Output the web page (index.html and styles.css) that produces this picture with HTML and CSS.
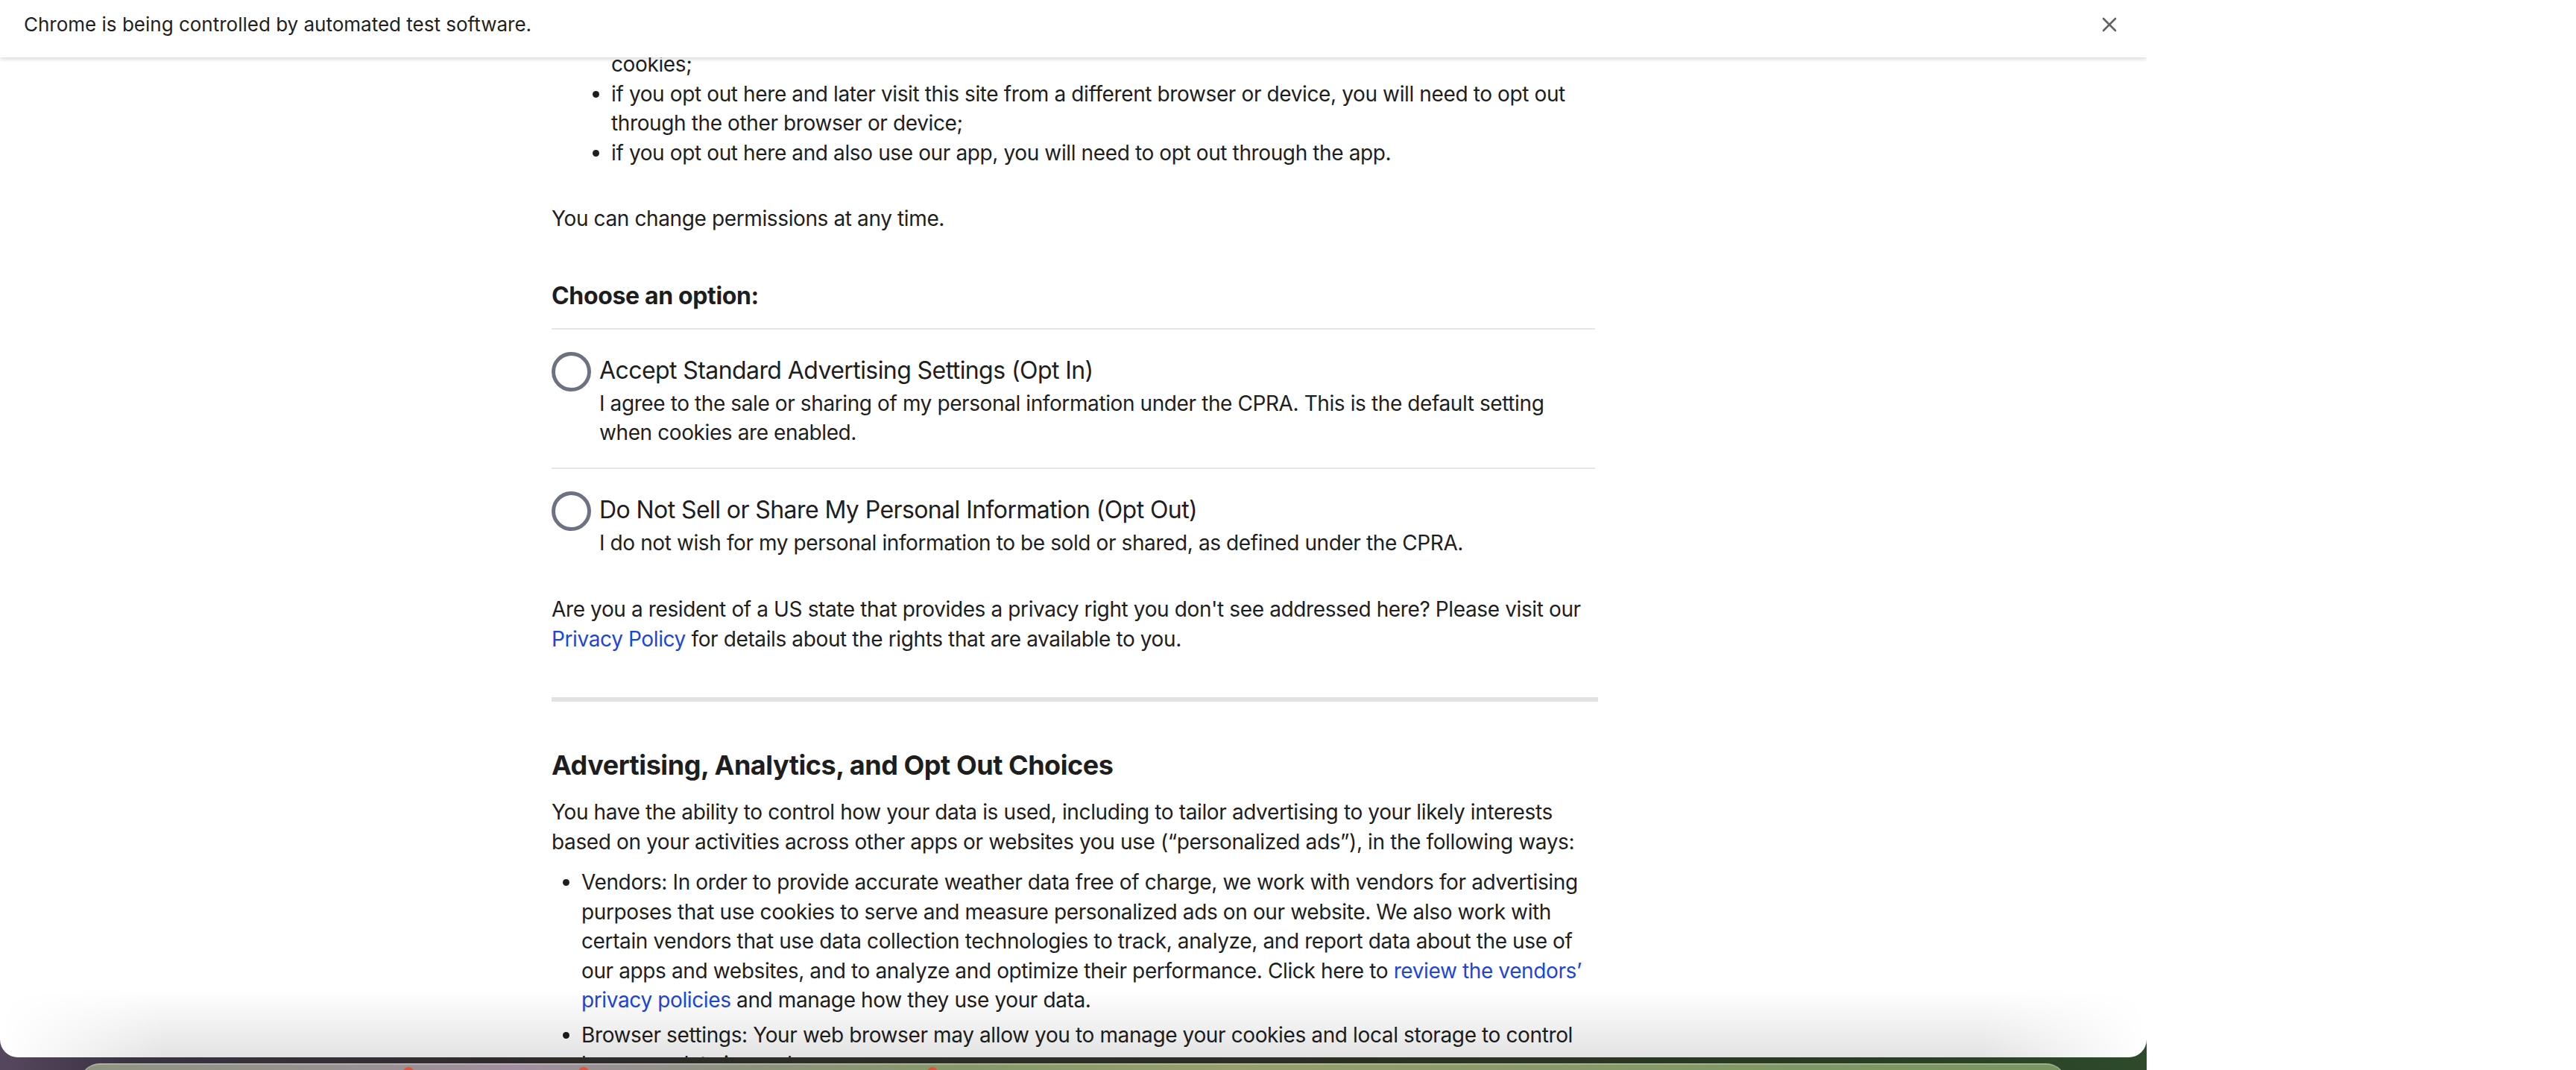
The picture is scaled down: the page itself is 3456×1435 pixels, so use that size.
FILE: index.html
```html
<!DOCTYPE html>
<html lang="en">
<head>
<meta charset="utf-8">
<title>Privacy Settings</title>
<link rel="stylesheet" href="styles.css">
</head>
<body>
<div class="screen">
  <div class="window">
    <div class="infobar">
      <span class="infobar-text">Chrome is being controlled by automated test software.</span>
      <span class="infobar-close">
        <svg width="20" height="20" viewBox="0 0 20 20"><path d="M2 2 L18 18 M18 2 L2 18" stroke="#5f6368" stroke-width="2.6" stroke-linecap="round" fill="none"/></svg>
      </span>
    </div>
    <main class="page">
      <ul class="list-a">
        <li class="cont">cookies;</li>
        <li>if you opt out here and later visit this site from a different browser or device, you will need to opt out through the other browser or device;</li>
        <li>if you opt out here and also use our app, you will need to opt out through the app.</li>
      </ul>
      <p class="perm">You can change permissions at any time.</p>
      <h3 class="choose">Choose an option:</h3>
      <div class="options">
        <label class="option">
          <span class="radio"></span>
          <span class="opt-text">
            <span class="opt-title">Accept Standard Advertising Settings (Opt In)</span>
            <span class="opt-desc">I agree to the sale or sharing of my personal information under the CPRA. This is the default setting when cookies are enabled.</span>
          </span>
        </label>
        <label class="option">
          <span class="radio"></span>
          <span class="opt-text">
            <span class="opt-title">Do Not Sell or Share My Personal Information (Opt Out)</span>
            <span class="opt-desc">I do not wish for my personal information to be sold or shared, as defined under the CPRA.</span>
          </span>
        </label>
      </div>
      <p class="resident">Are you a resident of a US state that provides a privacy right you don't see addressed here? Please visit our <a href="#">Privacy Policy</a> for details about the rights that are available to you.</p>
      <hr class="thick">
      <h2 class="section-title">Advertising, Analytics, and Opt Out Choices</h2>
      <p class="intro">You have the ability to control how your data is used, including to tailor advertising to your likely interests based on your activities across other apps or websites you use (“personalized ads”), in the following ways:</p>
      <ul class="list-b">
        <li>Vendors: In order to provide accurate weather data free of charge, we work with vendors for advertising purposes that use cookies to serve and measure personalized ads on our website. We also work with certain vendors that use data collection technologies to track, analyze, and report data about the use of our apps and websites, and to analyze and optimize their performance. Click here to <a href="#">review the vendors’ privacy policies</a> and manage how they use your data.</li>
        <li>Browser settings: Your web browser may allow you to manage your cookies and local storage to control how your data is used.</li>
      </ul>
    </main>
    <div class="fade"></div>
  </div>
  <div class="dock">
    <span class="dock-icon i1"></span>
    <span class="dock-icon i2"></span>
    <span class="dock-icon i3"></span>
  </div>
</div>
</body>
</html>
```
FILE: styles.css
```css
html, body {
  margin: 0;
  padding: 0;
}
body {
  width: 3456px;
  height: 1435px;
  overflow: hidden;
  background: #ffffff;
  font-family: Inter, "Noto Sans", sans-serif;
}
.screen {
  width: 2880px;
  height: 1435px;
  overflow: hidden;
  background: linear-gradient(90deg, #56475e 0%, #3b3242 6%, #2e2b2a 25%, #2b2e24 60%, #2a3a24 85%, #2d4a2b 100%);
}
.window {
  position: relative;
  height: 1418px;
  background: #ffffff;
  border-radius: 0 0 24px 24px;
  overflow: hidden;
}
.infobar {
  position: absolute;
  top: 0;
  left: 0;
  right: 0;
  height: 77px;
  background: #ffffff;
  box-shadow: 0 2px 6px rgba(0, 0, 0, 0.16);
  display: flex;
  justify-content: space-between;
  align-items: flex-start;
  padding: 16px 40px 0 32px;
  box-sizing: border-box;
  z-index: 2;
}
.infobar-text {
  font-family: Inter, "Noto Sans", sans-serif;
  font-size: 26px;
  line-height: 34px;
  color: #1f1f1f;
}
.infobar-close {
  display: flex;
  margin-top: 7px;
}
.page {
  width: 1400px;
  margin: 0 auto;
  padding-top: 67px;
  font-size: 28px;
  line-height: 39.5px;
  letter-spacing: -0.38px;
  color: #1e1e1e;
}
.page a {
  color: #1d46d8;
  text-decoration: none;
}
.list-a {
  margin: 0;
  padding-left: 80px;
}
.list-a li.cont {
  list-style: none;
}
.perm {
  margin: 49px 0 0;
}
.choose {
  margin: 61px 0 0;
  font-size: 32px;
  line-height: 44px;
  font-weight: 700;
  letter-spacing: -0.35px;
}
.options {
  margin-top: 21px;
  border-top: 2px solid #e6e6e6;
}
.option {
  display: flex;
  align-items: flex-start;
  gap: 11px;
  padding: 33px 0 26px;
  border-bottom: 2px solid #e6e6e6;
}
.option:last-child {
  border-bottom: none;
  padding-bottom: 0;
}
.radio {
  flex: none;
  width: 53px;
  height: 53px;
  box-sizing: border-box;
  border: 5px solid #6c7282;
  border-radius: 50%;
  margin-top: -3px;
}
.opt-text {
  display: flex;
  flex-direction: column;
  gap: 3px;
}
.opt-title {
  font-size: 32px;
  line-height: 44px;
  letter-spacing: -0.58px;
}
.opt-desc {
  letter-spacing: -0.4px;
}
.resident {
  margin: 50px 0 0;
}
.thick {
  margin: 58px 0 0;
  border: none;
  height: 6px;
  width: 1404px;
  background: #e2e2e2;
}
.section-title {
  margin: 59px 0 0;
  font-size: 36px;
  line-height: 52px;
  font-weight: 700;
  letter-spacing: -0.45px;
}
.intro {
  margin: 18px 0 0;
}
.list-b {
  margin: 15px 0 0;
  padding-left: 40px;
}
.list-b li + li {
  margin-top: 7px;
}
.fade {
  position: absolute;
  left: 0;
  right: 0;
  bottom: 0;
  height: 90px;
  background: linear-gradient(180deg, rgba(0, 0, 0, 0) 0%, rgba(0, 0, 0, 0.11) 100%);
  -webkit-mask-image: linear-gradient(90deg, transparent 0, #000 220px, #000 2660px, transparent 2880px);
  mask-image: linear-gradient(90deg, transparent 0, #000 220px, #000 2660px, transparent 2880px);
  pointer-events: none;
}
.dock {
  display: flex;
  margin: 8px 0 0 106px;
  width: 2667px;
  height: 40px;
  border-radius: 28px 28px 0 0;
  border-top: 2px solid rgba(255, 255, 255, 0.25);
  box-sizing: border-box;
  background: linear-gradient(90deg, #8e9481 0%, #97918f 12%, #a08f9f 22%, #8d9380 33%, #86996a 45%, #97a06e 58%, #8a9a6a 72%, #7f9766 86%, #7a9561 100%);
}
.dock-icon {
  flex: none;
  width: 14px;
  height: 14px;
  border-radius: 50%;
  background: #e2533a;
  margin-top: 3px;
}
.i1 { margin-left: 435px; }
.i2 { margin-left: 221px; }
.i3 { margin-left: 454px; }
```
